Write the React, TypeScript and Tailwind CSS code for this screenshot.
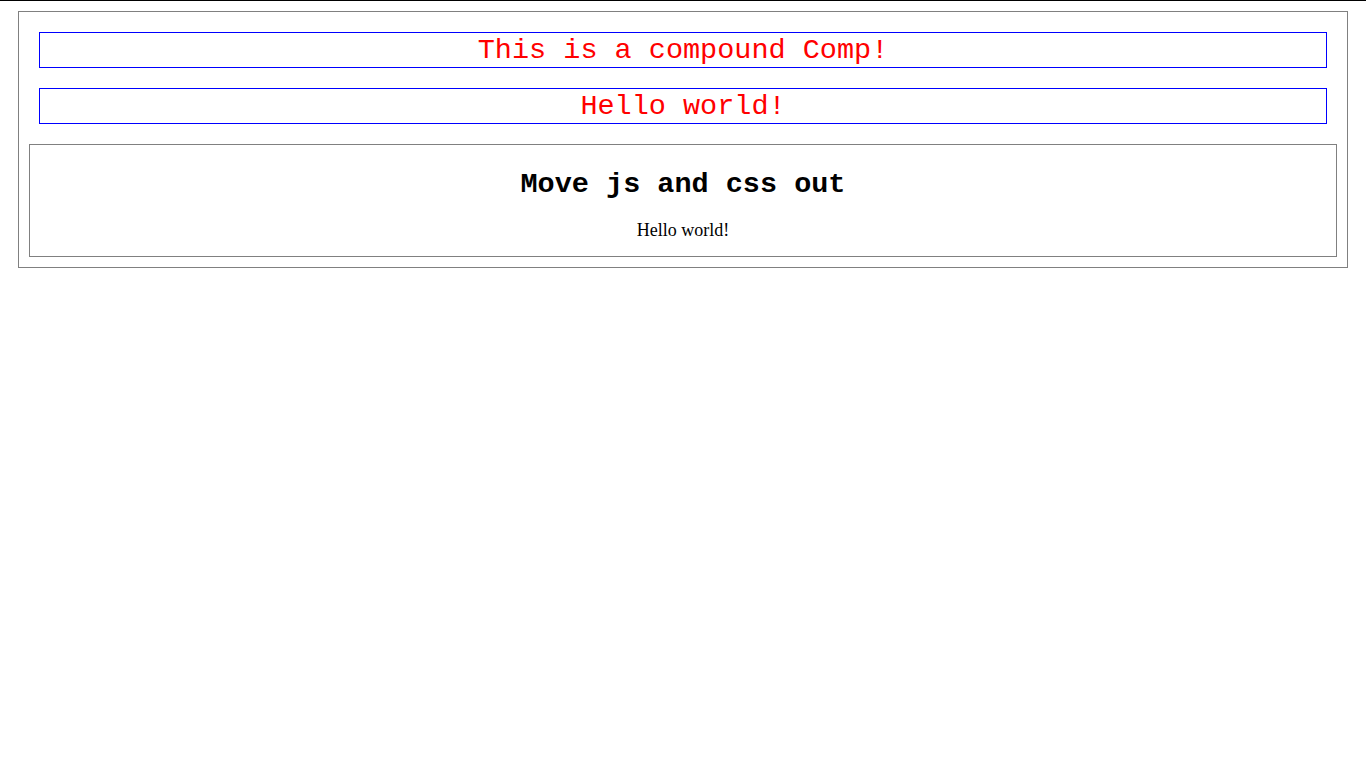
import React from 'react'

const mono = "font-['Liberation_Mono','DejaVu_Sans_Mono',monospace]"

function TitleBox({ text }: { text: string }) {
  return (
    <div className="mx-[10px] border border-[#0000ff] pt-[2px] text-center">
      <div className={`${mono} text-[28.5px] leading-[32px] text-[#ff0000]`}>{text}</div>
    </div>
  )
}

export default function App() {
  return (
    <div className="border-t border-black bg-white px-[18px] pt-[10px]">
      <div className="border border-[#808080] p-[10px]">
        <div className="pt-[10px]">
          <TitleBox text="This is a compound Comp!" />
        </div>
        <div className="pt-[20px]">
          <TitleBox text="Hello world!" />
        </div>
        <div className="mt-[20px] border border-[#808080] text-center">
          <h2 className={`${mono} mt-[23px] text-[28.5px] font-bold leading-[34px] text-black`}>
            Move js and css out
          </h2>
          <p className="mt-[18px] mb-[16px] font-['Liberation_Serif',serif] text-[18px] leading-[20px] text-black">
            Hello world!
          </p>
        </div>
      </div>
    </div>
  )
}
